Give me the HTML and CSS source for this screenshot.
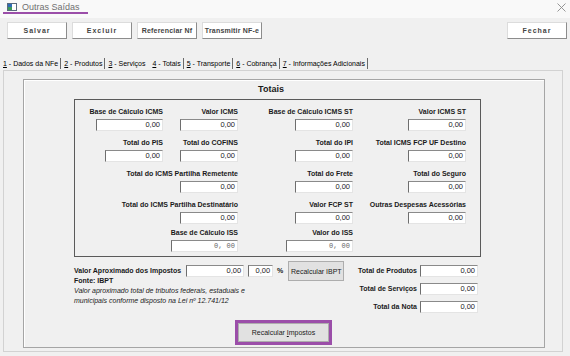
FILE: index.html
```html
<!DOCTYPE html>
<html lang="pt-BR">
<head>
    <meta charset="UTF-8">
    <meta name="viewport" content="width=device-width, initial-scale=1.0">
    <title>Outras Saídas</title>
    <link rel="stylesheet" href="styles.css">
</head>
<body>
    <div class="titlebar">
        <div class="title">
            <svg class="app-icon" width="10" height="8" viewBox="0 0 10 8">
                <rect x="0.5" y="0.5" width="9" height="7" fill="#fff" stroke="#5a6b7d"/>
                <rect x="1" y="1" width="4" height="3" fill="#2f6db5"/>
                <rect x="1" y="4" width="4" height="3" fill="#3d9a5a"/>
            </svg>
            <span>Outras Saídas</span>
        </div>
        <svg class="close" width="9" height="9" viewBox="0 0 9 9">
            <path d="M0.5 0.5 L8.5 8.5 M8.5 0.5 L0.5 8.5" stroke="#8a8a8a" stroke-width="0.9"/>
        </svg>
    </div>

    <div class="toolbar">
        <button class="tool spaced">Salvar</button>
        <button class="tool spaced">Excluir</button>
        <button class="tool">Referenciar Nf</button>
        <button class="tool">Transmitir NF-e</button>
        <button class="tool spaced push">Fechar</button>
    </div>

    <div class="tabs">
        <span class="tab"><u>1</u> - Dados da NFe</span>
        <span class="tab"><u>2</u> - Produtos</span>
        <span class="tab open"><u>3</u> - Serviços</span>
        <span class="tab active"><u>4</u> - Totais</span>
        <span class="tab"><u>5</u> - Transporte</span>
        <span class="tab"><u>6</u> - Cobrança</span>
        <span class="tab"><u>7</u> - Informações Adicionais</span>
    </div>

    <div class="panel">
        <div class="group">
            <div class="group-title">Totais</div>

            <div class="fields">
                <div class="field col1"><label>Base de Cálculo ICMS</label><div class="input w67">0,00</div></div>
                <div class="field col2"><label>Valor ICMS</label><div class="input">0,00</div></div>
                <div class="field col3"><label>Base de Cálculo ICMS ST</label><div class="input">0,00</div></div>
                <div class="field col4"><label>Valor ICMS ST</label><div class="input">0,00</div></div>

                <div class="field col1"><label>Total do PIS</label><div class="input">0,00</div></div>
                <div class="field col2"><label>Total do COFINS</label><div class="input">0,00</div></div>
                <div class="field col3"><label>Total do IPI</label><div class="input">0,00</div></div>
                <div class="field col4"><label>Total ICMS FCP UF Destino</label><div class="input">0,00</div></div>

                <div class="field wide"><label>Total do ICMS Partilha Remetente</label><div class="input">0,00</div></div>
                <div class="field col3"><label>Total do Frete</label><div class="input">0,00</div></div>
                <div class="field col4"><label>Total do Seguro</label><div class="input">0,00</div></div>

                <div class="field wide"><label>Total do ICMS Partilha Destinatário</label><div class="input">0,00</div></div>
                <div class="field col3"><label>Valor FCP ST</label><div class="input">0,00</div></div>
                <div class="field col4"><label>Outras Despesas Acessórias</label><div class="input">0,00</div></div>

                <div class="field wide last"><label>Base de Cálculo ISS</label><div class="input w67 mono">0, 00</div></div>
                <div class="field col3 last"><label>Valor do ISS</label><div class="input w67 mono">0, 00</div></div>
            </div>

            <div class="bottom">
                <div class="ibpt">
                    <div class="ibpt-row">
                        <label>Valor Aproximado dos Impostos</label>
                        <div class="input">0,00</div>
                        <div class="input pct">0,00</div>
                        <span class="bold">%</span>
                        <button class="win-btn ibpt-btn">Recalcular IBPT</button>
                    </div>
                    <div class="bold source">Fonte: IBPT</div>
                    <p class="note">Valor aproximado total de tributos federais, estaduais e<br>municipais conforme disposto na Lei nº 12.741/12</p>
                    <button class="win-btn recalc">Recalcular <u>I</u>mpostos</button>
                </div>

                <div class="sums">
                    <label>Total de Produtos</label><div class="input">0,00</div>
                    <label>Total de Serviços</label><div class="input">0,00</div>
                    <label>Total da Nota</label><div class="input">0,00</div>
                </div>
            </div>
        </div>
    </div>
</body>
</html>
```

FILE: styles.css
```css
body {
    margin: 0;
    width: 570px;
    height: 356px;
    overflow: hidden;
    background-color: #f0f0f0;
    font-family: "Liberation Sans", Arial, sans-serif;
    font-size: 7px;
    color: #1a1a1a;
}
button {
    font-family: inherit;
    cursor: default;
}
.titlebar {
    height: 18px;
    background-color: #f9f9f9;
    display: flex;
    justify-content: space-between;
    align-items: flex-start;
}
.title {
    margin-left: 3px;
    width: 81px;
    height: 10px;
    padding: 2px 0 0 4px;
    display: flex;
    align-items: center;
    gap: 5px;
    border-bottom: 2px solid #9b4ea9;
    font-size: 9px;
    color: #707070;
}
.close {
    margin: 3px 4px 0 0;
}
.toolbar {
    height: 28px;
    padding: 4px 3px 0 7px;
    box-sizing: border-box;
    display: flex;
    align-items: flex-start;
    gap: 5px;
}
.tool {
    width: 60px;
    height: 17px;
    padding: 0;
    background-color: #fff;
    border: 1px solid #dcdcdc;
    border-right-color: #8c8c8c;
    border-bottom-color: #8c8c8c;
    font-weight: bold;
    font-size: 7px;
    letter-spacing: 0.2px;
    color: #444;
}
.tool.spaced {
    letter-spacing: 1px;
}
.tool.push {
    margin-left: auto;
}
.tabs {
    margin-top: 11px;
    height: 13px;
    padding-left: 2px;
    display: flex;
    align-items: center;
    color: #000;
}
.tab {
    padding: 0 2px 0 1px;
    line-height: 11px;
    border-right: 1px solid #6a6a6a;
}
.tab + .tab {
    padding-left: 3px;
}
.tab.open {
    border-right: none;
    padding-right: 6px;
}
.tab.active {
    padding-left: 1px;
}
.panel {
    margin: 0 7px 0 3px;
    height: 282px;
    box-sizing: border-box;
    padding: 8px 17px 0 19px;
    border: 1px solid #d2d2d2;
}
.group {
    height: 269px;
    box-sizing: border-box;
    padding: 2px 0 0 50px;
    border: 1px solid #a5a5a5;
    box-shadow: inset 1px 1px 0 #fff;
}
.group-title {
    width: 394px;
    padding-right: 13px;
    line-height: 14px;
    text-align: center;
    font-weight: bold;
    font-size: 9px;
}
.fields {
    margin-top: 3px;
    width: 407px;
    box-sizing: border-box;
    padding: 6px 0 4px;
    border: 1px solid #5a5a5a;
    display: grid;
    grid-template-columns: 88px 75px 115px 113px;
    row-gap: 6px;
}
.field {
    display: flex;
    flex-direction: column;
    align-items: flex-end;
}
.field label,
.ibpt-row label,
.sums label,
.bold {
    font-weight: bold;
    white-space: nowrap;
    line-height: 12px;
}
.col1 { grid-column: 1; }
.col2 { grid-column: 2; }
.col3 { grid-column: 3; }
.col4 { grid-column: 4; }
.wide { grid-column: 1 / 3; }
.field.last {
    margin-top: -3px;
}
.input {
    width: 58px;
    height: 12px;
    margin-top: 1px;
    box-sizing: border-box;
    padding-right: 2px;
    background-color: #fff;
    border: 1px solid #e4e4e4;
    border-top-color: #8a8a8a;
    border-left-color: #6e6e6e;
    text-align: right;
    font-size: 7.5px;
    line-height: 10px;
    color: #222;
}
.input.w67 {
    width: 67px;
}
.input.mono {
    font-family: "Liberation Mono", monospace;
    font-size: 7px;
    color: #666;
}
.bottom {
    margin-top: 8px;
    width: 407px;
    display: flex;
    justify-content: space-between;
    align-items: flex-start;
}
.ibpt-row {
    height: 11px;
    display: flex;
    align-items: flex-start;
}
.ibpt-row label {
    margin-right: 5px;
}
.ibpt-row .input {
    margin-top: 0;
    margin-right: 4px;
}
.ibpt-row .input.pct {
    width: 25px;
}
.ibpt-row .bold {
    margin-right: 5px;
}
.bold.source {
    line-height: 10px;
}
.win-btn {
    padding: 0;
    background-color: #e1e1e1;
    border: 1px solid #adadad;
    font-size: 7px;
    white-space: nowrap;
    color: #1a1a1a;
}
.ibpt-btn {
    width: 56px;
    height: 20px;
    margin-top: -4px;
}
.note {
    margin: 0;
    line-height: 10px;
    font-style: italic;
    color: #222;
}
.recalc {
    display: block;
    margin: 17px 0 0 164px;
    width: 91px;
    height: 19px;
    outline: 3px solid #9b4ea9;
}
.sums {
    flex-shrink: 0;
    padding-right: 3px;
    display: grid;
    grid-template-columns: auto 56px;
    column-gap: 5px;
    row-gap: 6px;
    align-items: center;
    justify-items: end;
}
.sums .input {
    margin-top: 0;
}
```
